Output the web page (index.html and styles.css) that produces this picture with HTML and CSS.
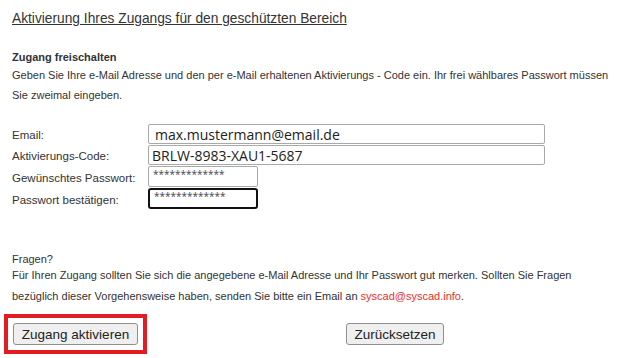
FILE: index.html
```html
<!DOCTYPE html>
<html lang="de">
<head>
    <meta charset="UTF-8">
    <title>Aktivierung</title>
    <link rel="stylesheet" href="styles.css">
</head>
<body>

<div class="page">
    <h1 class="title">Aktivierung Ihres Zugangs für den geschützten Bereich</h1>

    <div class="intro">
        <div class="intro-head">Zugang freischalten</div>
        <p>Geben Sie Ihre e-Mail Adresse und den per e-Mail erhaltenen Aktivierungs - Code ein. Ihr frei wählbares Passwort müssen Sie zweimal eingeben.</p>
    </div>

    <div class="form">
        <label for="email">Email:</label>
        <input type="text" id="email" class="field wide big" value="max.mustermann@email.de">
        <label for="code">Aktivierungs-Code:</label>
        <input type="text" id="code" class="field wide code" value="BRLW-8983-XAU1-5687">
        <label for="pw1">Gewünschtes Passwort:</label>
        <input type="text" id="pw1" class="field short" value="*************">
        <label for="pw2">Passwort bestätigen:</label>
        <input type="text" id="pw2" class="field short focus" value="*************">
    </div>

    <div class="questions">
        <div class="q-head">Fragen?</div>
        <p>Für Ihren Zugang sollten Sie sich die angegebene e-Mail Adresse und Ihr Passwort gut merken. Sollten Sie Fragen bezüglich dieser Vorgehensweise haben, senden Sie bitte ein Email an <a href="#" class="mail">syscad@syscad.info</a>.</p>
    </div>

    <div class="actions">
        <div class="highlight">
            <button class="btn">Zugang aktivieren</button>
        </div>
        <button class="btn reset">Zurücksetzen</button>
    </div>
</div>

</body>
</html>
```

FILE: styles.css
```css
body {
    margin: 0;
    font-family: "Liberation Sans", Arial, sans-serif;
    color: #333;
    background-color: #fff;
}
.page {
    padding: 11px 0 0 12px;
    width: 600px;
}
.title {
    margin: 0;
    font-size: 13.75px;
    font-weight: normal;
    text-decoration: underline;
    line-height: 16px;
}
.intro {
    margin-top: 22px;
    font-size: 11px;
}
.intro-head {
    font-weight: bold;
    line-height: 16px;
}
.intro p {
    margin: 0;
    line-height: 20px;
}
.form {
    margin-top: 19px;
    display: grid;
    grid-template-columns: 136px 397px;
    row-gap: 1px;
    font-size: 11.5px;
    align-items: center;
}
.form label {
    padding-top: 2px;
}
.field {
    box-sizing: border-box;
    height: 20px;
    margin: 0;
    padding: 0 4px;
    border: 1px solid #a9a9a9;
    border-radius: 2px;
    color: #222;
    font-family: "Open Sans", sans-serif;
}
.wide {
    width: 397px;
}
.big {
    font-size: 14px;
    padding-left: 6px;
}
.code {
    font-size: 14px;
    padding-left: 3px;
}
.short {
    width: 110px;
    font-size: 10px;
    height: 21px;
    padding-bottom: 6px;
    color: #445;
}
.focus {
    border: 2px solid #111;
    border-radius: 3px;
}
.questions {
    margin-top: 44px;
    font-size: 11px;
}
.q-head {
    line-height: 12px;
}
.questions p {
    margin: 0;
    line-height: 21px;
}
.mail {
    color: #e8302c;
    text-decoration: none;
}
.actions {
    margin: 7px 0 0 -8px;
    display: flex;
    align-items: center;
    gap: 199px;
}
.highlight {
    border: 4px solid #e31c24;
    padding: 5px;
}
.btn {
    font-family: "Liberation Sans", Arial, sans-serif;
    font-size: 13.5px;
    color: #222;
    background-color: #efefef;
    border: 1px solid #8f8f8f;
    border-radius: 3px;
    padding: 0 7px;
    height: 22px;
    width: 125px;
}
.reset {
    width: 98px;
}
```
